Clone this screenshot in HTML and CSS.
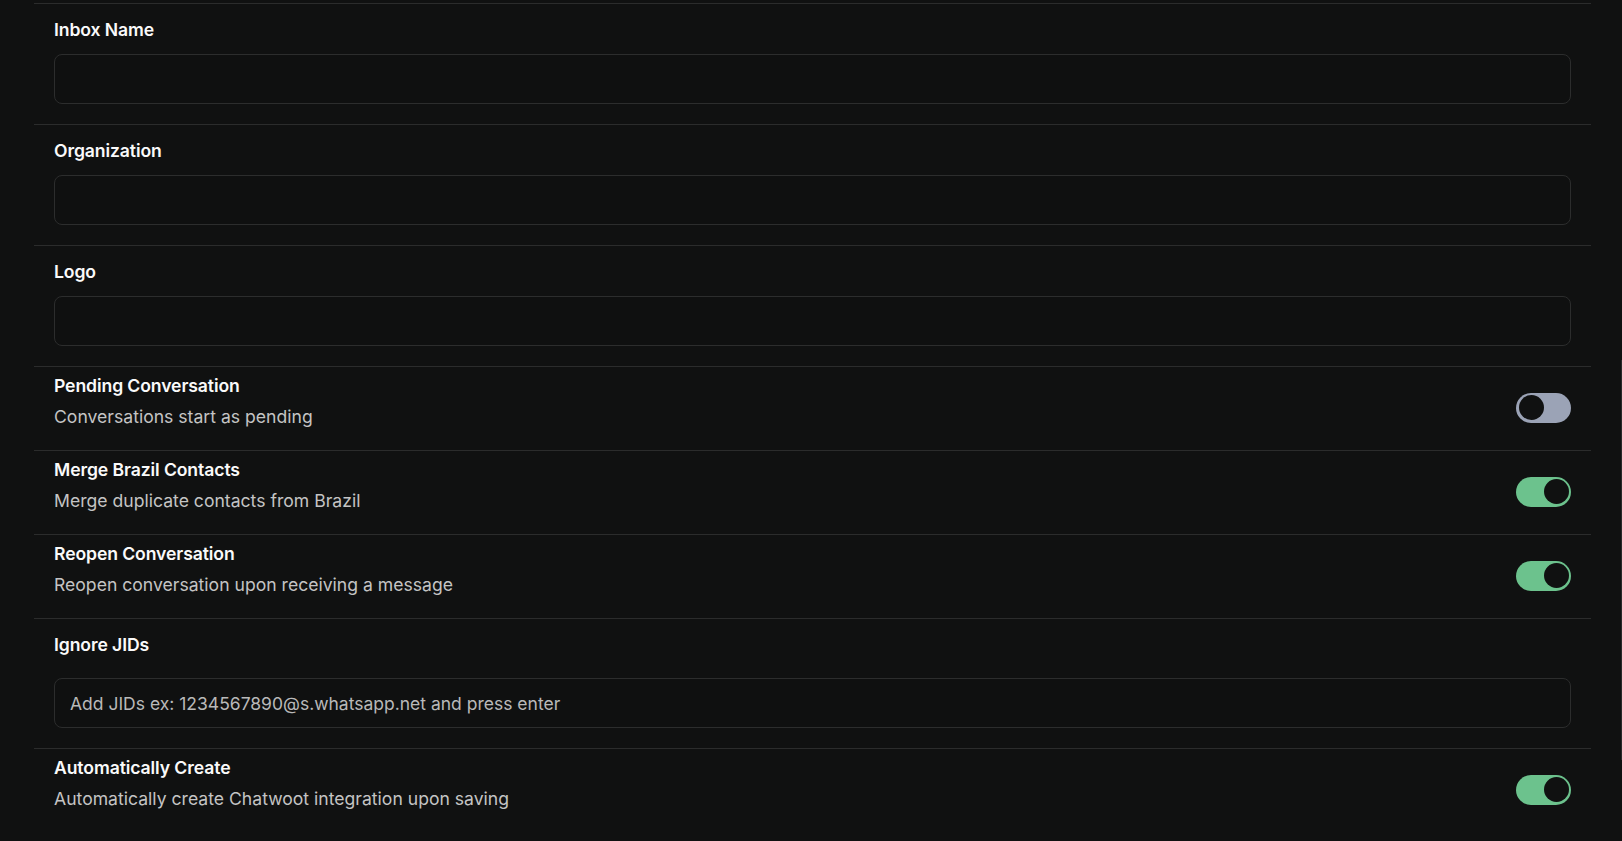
FILE: index.html
```html
<!DOCTYPE html>
<html lang="en">
<head>
<meta charset="utf-8">
<title>Chatwoot settings</title>
<link rel="stylesheet" href="styles.css">
</head>
<body>
<div class="page">
  <div class="panel">
    <div class="field">
      <label class="label">Inbox Name</label>
      <div class="input"></div>
    </div>
    <div class="field">
      <label class="label">Organization</label>
      <div class="input"></div>
    </div>
    <div class="field">
      <label class="label">Logo</label>
      <div class="input"></div>
    </div>
    <div class="switch-row">
      <div class="switch-text">
        <div class="title">Pending Conversation</div>
        <div class="desc">Conversations start as pending</div>
      </div>
      <span class="toggle off"><span class="knob"></span></span>
    </div>
    <div class="switch-row">
      <div class="switch-text">
        <div class="title">Merge Brazil Contacts</div>
        <div class="desc">Merge duplicate contacts from Brazil</div>
      </div>
      <span class="toggle on"><span class="knob"></span></span>
    </div>
    <div class="switch-row">
      <div class="switch-text">
        <div class="title">Reopen Conversation</div>
        <div class="desc">Reopen conversation upon receiving a message</div>
      </div>
      <span class="toggle on"><span class="knob"></span></span>
    </div>
    <div class="field field-tags">
      <label class="label">Ignore JIDs</label>
      <div class="input"><span class="placeholder">Add JIDs ex: 1234567890@s.whatsapp.net and press enter</span></div>
    </div>
    <div class="switch-row">
      <div class="switch-text">
        <div class="title">Automatically Create</div>
        <div class="desc">Automatically create Chatwoot integration upon saving</div>
      </div>
      <span class="toggle on"><span class="knob"></span></span>
    </div>
  </div>
  <div class="edge"></div>
</div>
</body>
</html>
```

FILE: styles.css
```css
html, body {
  margin: 0;
  padding: 0;
  height: 100%;
  background: #101111;
  overflow: hidden;
}
body {
  font-family: Inter, "Noto Sans", sans-serif;
  color: #f5f5f5;
}
.page {
  display: flex;
  height: 100%;
  padding-top: 3px;
  box-sizing: border-box;
}
.panel {
  margin-left: 34px;
  width: 1557px;
  display: flex;
  flex-direction: column;
}
.edge {
  flex: 1;
  position: relative;
}
.edge::after {
  content: "";
  position: absolute;
  right: 0;
  top: 357px;
  height: 400px;
  width: 1px;
  background: #2a2b2b;
}
.field {
  border-top: 1px solid #2b2c2c;
  padding: 14px 20px 20px;
  display: flex;
  flex-direction: column;
  gap: 12px;
}
.field-tags {
  gap: 21px;
}
.label {
  font-size: 17.6px;
  line-height: 24px;
  font-weight: 600;
  letter-spacing: -0.1px;
  color: #fafafa;
}
.input {
  height: 50px;
  box-sizing: border-box;
  border: 1px solid #2c2d2d;
  border-radius: 8px;
  background: #0f1010;
  display: flex;
  align-items: center;
  padding: 0 15px;
}
.placeholder {
  font-size: 17.5px;
  color: #b9b9b9;
}
.switch-row {
  border-top: 1px solid #2b2c2c;
  padding: 0 20px;
  display: flex;
  align-items: center;
  justify-content: space-between;
}
.switch-text {
  padding: 7px 0 21px;
}
.title {
  font-size: 17.6px;
  line-height: 24px;
  font-weight: 600;
  letter-spacing: -0.1px;
  color: #fafafa;
}
.desc {
  margin-top: 7px;
  font-size: 17.6px;
  line-height: 24px;
  color: #c4c4c4;
}
.toggle {
  width: 55px;
  height: 30px;
  border-radius: 15px;
  box-sizing: border-box;
  padding: 2.5px;
  display: flex;
  flex-shrink: 0;
  margin-bottom: 2px;
}
.toggle.off {
  background: #9ba3b6;
  justify-content: flex-start;
}
.toggle.on {
  background: #6cc28d;
  justify-content: flex-end;
}
.knob {
  width: 25px;
  height: 25px;
  border-radius: 50%;
  background: #101111;
}
```
